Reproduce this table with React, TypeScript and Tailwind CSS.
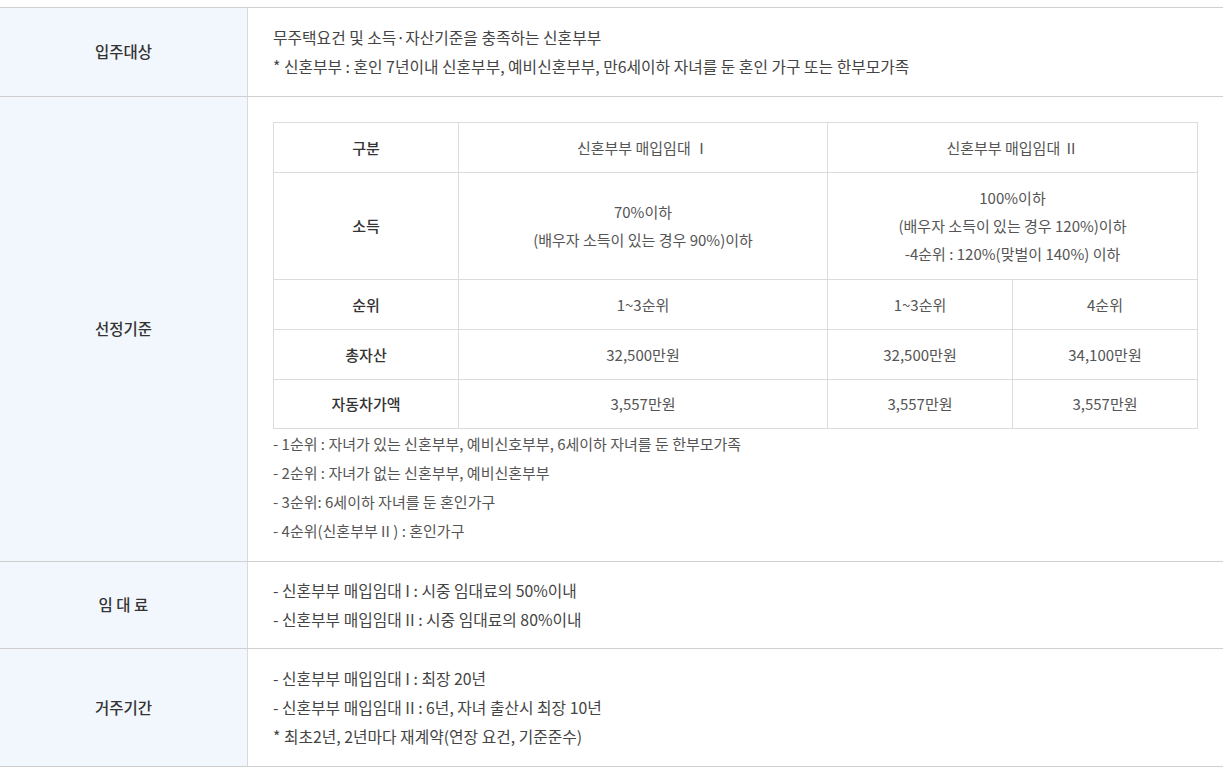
const font = { fontFamily: '"Noto Sans CJK KR", "Noto Sans", sans-serif' };

function Row({
  label,
  height,
  children,
  top,
}: {
  label: string;
  height: string;
  children: React.ReactNode;
  top?: boolean;
}) {
  return (
    <div className={`grid grid-cols-[248px_1fr] border-b border-[#cfcfcf] ${height}`}>
      <div className="flex items-center justify-center bg-[#f2f7fd] border-r border-[#d6d9de] text-[15.5px] font-medium text-[#333]">
        {label}
      </div>
      <div
        className={`flex flex-col pl-[25px] pr-[26px] text-[15.8px] leading-[29px] text-[#444] ${
          top ? "justify-start pt-[25px]" : "justify-center"
        }`}
      >
        {children}
      </div>
    </div>
  );
}

export default function App() {
  const th = "border border-[#dcdcdc] text-center font-medium text-[#333]";
  const td = "border border-[#dcdcdc] text-center text-[#555]";

  return (
    <div className="w-[1230px] h-[771px] bg-white pt-[7px]" style={font}>
      <div className="w-[1223px] border-t border-[#cfcfcf]">
        {/* 입주대상 */}
        <Row label="입주대상" height="h-[89px]">
          <p>무주택요건 및 소득·자산기준을 충족하는 신혼부부</p>
          <p>* 신혼부부 : 혼인 7년이내 신혼부부, 예비신혼부부, 만6세이하 자녀를 둔 혼인 가구 또는 한부모가족</p>
        </Row>

        {/* 선정기준 */}
        <Row label="선정기준" height="h-[465px]" top>
          <table className="w-[925px] border-collapse text-[15px] leading-[28px]">
            <colgroup>
              <col className="w-[185px]" />
              <col className="w-[369px]" />
              <col className="w-[185px]" />
              <col className="w-[185px]" />
            </colgroup>
            <tbody>
              <tr className="h-[50px]">
                <td className={th}>구분</td>
                <td className={td}>신혼부부 매입임대 Ⅰ</td>
                <td className={td} colSpan={2}>
                  신혼부부 매입임대 Ⅱ
                </td>
              </tr>
              <tr className="h-[107px]">
                <td className={th}>소득</td>
                <td className={td}>
                  70%이하
                  <br />
                  (배우자 소득이 있는 경우 90%)이하
                </td>
                <td className={td} colSpan={2}>
                  100%이하
                  <br />
                  (배우자 소득이 있는 경우 120%)이하
                  <br />
                  -4순위 : 120%(맞벌이 140%) 이하
                </td>
              </tr>
              <tr className="h-[50px]">
                <td className={th}>순위</td>
                <td className={td}>1~3순위</td>
                <td className={td}>1~3순위</td>
                <td className={td}>4순위</td>
              </tr>
              <tr className="h-[50px]">
                <td className={th}>총자산</td>
                <td className={td}>32,500만원</td>
                <td className={td}>32,500만원</td>
                <td className={td}>34,100만원</td>
              </tr>
              <tr className="h-[49px]">
                <td className={th}>자동차가액</td>
                <td className={td}>3,557만원</td>
                <td className={td}>3,557만원</td>
                <td className={td}>3,557만원</td>
              </tr>
            </tbody>
          </table>
          <div className="text-[15px] text-[#555]">
            <p>- 1순위 : 자녀가 있는 신혼부부, 예비신호부부, 6세이하 자녀를 둔 한부모가족</p>
            <p>- 2순위 : 자녀가 없는 신혼부부, 예비신혼부부</p>
            <p>- 3순위: 6세이하 자녀를 둔 혼인가구</p>
            <p>- 4순위(신혼부부 II ) : 혼인가구</p>
          </div>
        </Row>

        {/* 임대료 */}
        <Row label="임 대 료" height="h-[87px]">
          <p>- 신혼부부 매입임대 I : 시중 임대료의 50%이내</p>
          <p>- 신혼부부 매입임대 II : 시중 임대료의 80%이내</p>
        </Row>

        {/* 거주기간 */}
        <Row label="거주기간" height="h-[118px]">
          <p>- 신혼부부 매입임대 I : 최장 20년</p>
          <p>- 신혼부부 매입임대 II : 6년, 자녀 출산시 최장 10년</p>
          <p>* 최초2년, 2년마다 재계약(연장 요건, 기준준수)</p>
        </Row>
      </div>
    </div>
  );
}
